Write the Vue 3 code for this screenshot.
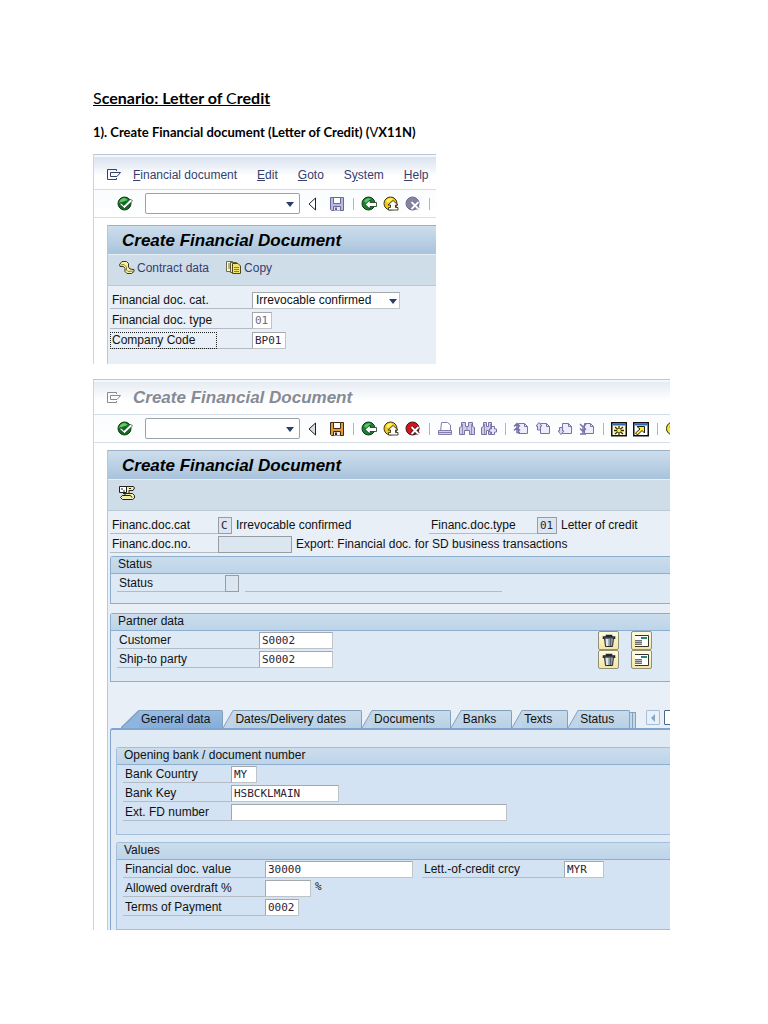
<template>
  <main class="page">
    <svg class="sprite" aria-hidden="true">
      <symbol id="menu" viewBox="0 0 16 16">
        <path d="M10.500 4V2.500H1.500V12.500H10.500V11M4.500 5.500H14.500L11 9.500H4.500Z" fill="none" stroke="currentColor" />
      </symbol>
      <symbol id="check" viewBox="0 0 16 16">
        <circle cx="7.500" cy="7.500" r="6.500" fill="#08731c" stroke="#123c16" />
        <path d="M2 7Q3 2 8 2L11 4L5 6Z" fill="#67c766" />
        <path d="M3.500 6.500L7 9.500L13.500 3L15.500 5L7.500 12.500L3 8.500Z" fill="#fff" stroke="#17351b" stroke-width=".7" />
      </symbol>
      <symbol id="disk" viewBox="0 0 16 16">
        <path d="M1.500 1.500H14.500V14.500H2.500L1.500 13.500Z" fill="var(--fill)" stroke="var(--line)" />
        <path d="M4.500 1.500H11.500V7.500H4.500Z" fill="#fff" stroke="var(--line)" />
        <path d="M4.500 14.500V10.500H11.500V14.500" fill="#e8e8ee" stroke="var(--line)" />
        <path d="M6 11.500H8V14H6Z" fill="var(--line)" />
      </symbol>
      <symbol id="back" viewBox="0 0 16 16">
        <circle cx="7.500" cy="7.500" r="6.500" fill="#15842d" stroke="#12361a" />
        <path d="M3 5Q6 1 10 3L5 7Z" fill="#60c665" />
        <path d="M4 8.500L9 4V6.500H15.500V10.500H9V13Z" fill="#fff" stroke="#17351b" stroke-width=".8" />
      </symbol>
      <symbol id="exit" viewBox="0 0 16 16">
        <circle cx="7.500" cy="7.500" r="6.500" fill="#f0c713" stroke="#403511" />
        <path d="M3 5Q6 1 10 3L5 7Z" fill="#fff36d" />
        <path d="M10 4.500L15 9H12.500V11.500H15V14H5.500V11.500H7.500V9H5Z" fill="#fff" stroke="#38321c" stroke-width=".9" />
      </symbol>
      <symbol id="cancel" viewBox="0 0 16 16">
        <circle cx="7.500" cy="7.500" r="6.500" fill="var(--fill)" stroke="var(--line)" />
        <path d="M6.500 6L13.500 13M13.500 6L6.500 13" stroke="var(--line)" stroke-width="3.500" />
        <path d="M6.500 6L13.500 13M13.500 6L6.500 13" stroke="#fff" stroke-width="2" />
      </symbol>
      <symbol id="print" viewBox="0 0 16 16">
        <path d="M4.500 1.500H10.500L13.500 4V10.500H3.500Z" fill="#fff" stroke="#817fae" />
        <path d="M1.500 9.500H14.500V13.500H1.500ZM2 11.500H14" fill="#d3d1ed" stroke="#817fae" />
      </symbol>
      <symbol id="find" viewBox="0 0 16 16">
        <path d="M2.500 1.500H6.500V5.500H9.500V1.500H13.500V5.500L15.500 6.500V13.500H10.500V9.500H5.500V13.500H.500V6.500L2.500 5.500Z" fill="#cfcbe9" stroke="#7773a7" />
        <path d="M3.500 3V13M8 5.500V9.500M12.500 3V13" stroke="#908bb9" />
      </symbol>
      <symbol id="findNext" viewBox="0 0 16 16">
        <path d="M2.500 1.500H5.500V5.500H7.500V1.500H10.500V5.500L11.500 6.500V13.500H7.500V9.500H5.500V13.500H.500V6.500L2.500 5.500Z" fill="#cfcbe9" stroke="#7773a7" />
        <path d="M3.500 3V13M9.500 3V13" stroke="#908bb9" />
        <path d="M10.500 5.500H13.500V8H15.500V11H13.500V13.500H10.500V11H8.500V8H10.500Z" fill="#e8e5f7" stroke="#7773a7" />
      </symbol>
      <symbol id="sheet" viewBox="0 0 16 16">
        <path d="M5.500 2.500H11.500L14.500 5.500V12.500H5.500Z" fill="#eeedfb" stroke="#7773a7" />
        <path d="M11.500 2.500V5.500H14.500" fill="none" stroke="#7773a7" />
      </symbol>
      <symbol id="first" viewBox="0 0 16 16">
        <use href="#sheet" />
        <path d="M1 5.500L4 2.500L7 5.500M1 9.500L4 6.500L7 9.500M4 3V11.500H7" fill="none" stroke="#7773a7" stroke-width="1.500" />
      </symbol>
      <symbol id="prev" viewBox="0 0 16 16">
        <use href="#sheet" />
        <path d="M1 5L4 1.500L7 5H5.500V9H2.500V5Z" fill="#dcd9f2" stroke="#7773a7" />
      </symbol>
      <symbol id="next" viewBox="0 0 16 16">
        <use href="#sheet" />
        <path d="M1 10H2.500V6.500H5.500V10H7L4 13.500Z" fill="#dcd9f2" stroke="#7773a7" />
      </symbol>
      <symbol id="last" viewBox="0 0 16 16">
        <use href="#sheet" />
        <path d="M1 3L4 6L7 3M1 7.500L4 10.500L7 7.500M1 13H7M4 6V13" fill="none" stroke="#7773a7" stroke-width="1.500" />
      </symbol>
      <symbol id="session" viewBox="0 0 16 16">
        <path d="M.750 1.750H15.250V14.750H.750Z" fill="#fffbd0" stroke="#111" stroke-width="1.500" />
        <path d="M1.500 2.500H14.500V4.500H1.500Z" fill="#2f66b5" />
        <path d="M8 5V8M8 11V14M3 9.500H6.500M9.500 9.500H13M4 6L7 8.500M12 6L9 8.500M4 13L7 10.500M12 13L9 10.500" stroke="#332f00" stroke-width="1.300" />
        <path d="M6.500 8H9.500V11H6.500Z" fill="#fff22c" />
      </symbol>
      <symbol id="shortcut" viewBox="0 0 16 16">
        <path d="M.750 1.750H15.250V14.750H.750Z" fill="#fff" stroke="#111" stroke-width="1.500" />
        <path d="M1.500 2.500H14.500V4.500H1.500Z" fill="#2f66b5" />
        <path d="M4 5.500H11.500V12L9 9.500L4.500 14L2.500 12L7 8Z" fill="#ffef29" stroke="#222" />
      </symbol>
      <symbol id="help" viewBox="0 0 16 16">
        <circle cx="8" cy="7.500" r="6.500" fill="#ffe51d" stroke="#2f2b10" />
        <path d="M5.500 6.500Q6 4 8 4T10.500 6.500Q10 8 8 9M8 11V12.500" fill="none" stroke="#222" stroke-width="2" />
      </symbol>
      <symbol id="contract" viewBox="0 0 16 16">
        <path d="M.500 4.500L3 1.500H7.500L9.500 3.500V7L11 9L15 9.500V11.500L12.500 13.500H8L6 11.500V8.500L4.500 6.500L1 6.500Z" fill="#f8eda0" stroke="#3b3822" />
        <path d="M1.500 5L5 4.500L7.500 7V10L9 11.500L14.500 11" fill="none" stroke="#8c8244" />
      </symbol>
      <symbol id="copy" viewBox="0 0 16 16">
        <path d="M.500 1.500H6.500V11.500H.500ZM2 4H5M2 6H5M2 8H5" fill="#fffbd6" stroke="#6d6a4d" />
        <path d="M4.500 2.500H10.500V12.500H4.500Z" fill="#f9f09c" stroke="#5f5b31" />
        <path d="M6.500 3.500H12L14.500 6V13.500H6.500Z" fill="#f3e26a" stroke="#4c4826" />
        <path d="M8 7.500H13M8 9.500H13M8 11.500H13" stroke="#8d8140" />
      </symbol>
      <symbol id="scroll" viewBox="0 0 16 16">
        <path d="M5.500 1.500H14.500L15.500 3L14 5.500H10V8.500H13.500L15.500 10.500V13L13.500 14.500H3.500L1.500 12.500L3.500 10.500H6V7Z" fill="#f1edac" stroke="#222" />
        <path d="M3.500 10.500H11.500L13 12.500M4 8.500H10" fill="none" stroke="#222" />
        <path d="M.500 1.500H7.500V7.500H.500Z" fill="#fff" stroke="#222" />
        <path d="M2 4H4M4 6H6M10 3.500H12" stroke="#222" />
      </symbol>
      <symbol id="trash" viewBox="0 0 16 16">
        <path d="M3.500 5H12.500L11.500 13.500H4.500Z" fill="#a6b0b8" stroke="#202830" />
        <path d="M6 6V13" stroke="#f5f7f8" stroke-width="1.500" />
        <path d="M9.500 6V13" stroke="#59636c" stroke-width="1.500" />
        <path d="M2.500 6V4H13.500V6M5.500 4V2.500H10.500V4" fill="none" stroke="#202830" stroke-width="1.600" />
      </symbol>
      <symbol id="address" viewBox="0 0 16 16">
        <path d="M1 2.500H14V13H1Z" fill="#fff" />
        <path d="M1 2.500H14.500V13.500H1" fill="none" stroke="#333" />
        <path d="M1 7H8V12H1Z" fill="#b9b9b9" />
        <path d="M1 7.500H8M1 9.500H8M1 11.500H8" stroke="#6e6e6e" />
        <path d="M7 4H10V6H7Z" fill="#34749b" />
        <path d="M10 4H13V6H10Z" fill="#279155" />
      </symbol>
    </svg>

    <h1><span>S</span>cenario: Letter of <span>C</span>redit</h1>
    <h2>1). Create Financial document (Letter of Credit) (<span>V</span>X11N)</h2>

    <section class="window initial">
      <nav class="menubar">
        <svg class="icon"><use href="#menu" /></svg>
        <a v-for="item in menu" :key="item.text" href="#">{{ item.before }}<u>{{ item.key }}</u>{{ item.text }}</a>
      </nav>
      <div class="toolbar">
        <button class="tool" aria-label="Enter"><svg class="icon"><use href="#check" /></svg></button>
        <div class="command">
          <input aria-label="Command" />
          <i class="arrow"></i>
        </div>
        <button class="collapse" aria-label="Hide command field">
          <svg viewBox="0 0 8 16"><path d="M7.500 2V14L1 8Z" fill="#fff" stroke="#222" /></svg>
        </button>
        <div v-for="(group, i) in shortTools" :key="i" class="tools">
          <button v-for="tool in group" :key="tool" class="tool off" :aria-label="tool">
            <svg class="icon"><use :href="'#' + tool" /></svg>
          </button>
        </div>
      </div>
      <div class="screen">
        <h3>Create Financial Document</h3>
        <div class="actions">
          <button><svg class="icon"><use href="#contract" /></svg>Contract data</button>
          <button><svg class="icon"><use href="#copy" /></svg>Copy</button>
        </div>
        <form class="content" @submit.prevent>
          <div class="row">
            <label class="label l142" for="cat">Financial doc. cat.</label>
            <div class="choice">
              <select id="cat"><option>Irrevocable confirmed</option></select>
              <i class="arrow"></i>
            </div>
          </div>
          <div class="row">
            <label class="label l142" for="type">Financial doc. type</label>
            <input id="type" class="w20 soft" value="01" />
          </div>
          <div class="row">
            <label class="label l142" for="company"><span class="focus">Company Code</span></label>
            <input id="company" class="w34" value="BP01" />
          </div>
        </form>
      </div>
    </section>

    <section class="window detail">
      <div class="menubar caption">
        <svg class="icon"><use href="#menu" /></svg>
        <strong>Create Financial Document</strong>
      </div>
      <div class="toolbar">
        <button class="tool" aria-label="Enter"><svg class="icon"><use href="#check" /></svg></button>
        <div class="command">
          <input aria-label="Command" />
          <i class="arrow"></i>
        </div>
        <button class="collapse" aria-label="Hide command field">
          <svg viewBox="0 0 8 16"><path d="M7.500 2V14L1 8Z" fill="#ddd" stroke="#222" /></svg>
        </button>
        <div v-for="(group, i) in allTools" :key="i" class="tools">
          <button v-for="tool in group" :key="tool" class="tool" :aria-label="tool">
            <svg class="icon"><use :href="'#' + tool" /></svg>
          </button>
        </div>
      </div>
      <div class="screen">
        <h3>Create Financial Document</h3>
        <div class="actions">
          <button aria-label="Document"><svg class="icon"><use href="#scroll" /></svg></button>
        </div>
        <form class="content" @submit.prevent>
          <div class="row">
            <label class="label l108" for="dcat">Financ.doc.cat</label>
            <input id="dcat" class="w14" value="C" readonly />
            <span class="text cat">Irrevocable confirmed</span>
            <label class="label l108" for="dtype">Financ.doc.type</label>
            <input id="dtype" class="w20" value="01" readonly />
            <span class="text">Letter of credit</span>
          </div>
          <div class="row">
            <label class="label l108" for="dno">Financ.doc.no.</label>
            <input id="dno" class="w74" readonly />
            <span class="text">Export: Financial doc. for SD business transactions</span>
          </div>

          <fieldset class="group status">
            <legend>Status</legend>
            <div class="row">
              <label class="label l108" for="status">Status</label>
              <input id="status" class="w14" readonly />
              <span class="rule"></span>
            </div>
          </fieldset>

          <fieldset class="group partner">
            <legend>Partner data</legend>
            <div v-for="partner in partners" :key="partner.id" class="row">
              <label class="label l142" :for="partner.id">{{ partner.label }}</label>
              <input :id="partner.id" class="w74" :value="partner.value" />
              <div class="keys">
                <button aria-label="Delete"><svg class="icon"><use href="#trash" /></svg></button>
                <button aria-label="Address"><svg class="icon"><use href="#address" /></svg></button>
              </div>
            </div>
          </fieldset>

          <div class="tabs">
            <button v-for="tab in tabs" :key="tab" class="tab" :class="{ active: tab === current }" @click="current = tab">
              <svg class="slant" viewBox="0 0 10 18" preserveAspectRatio="none">
                <path class="face" d="M0 18L10 0V18Z" />
                <path class="edge" d="M0 18L10 .500" />
              </svg>
              <span>{{ tab }}</span>
            </button>
            <i class="stack"></i>
            <i class="stack"></i>
            <button class="scroller" aria-label="Previous tabs"><i></i></button>
            <button class="scroller" aria-label="Next tabs"></button>
          </div>
          <div class="panel">
            <fieldset class="group">
              <legend>Opening bank / document number</legend>
              <div class="row">
                <label class="label l108" for="country">Bank Country</label>
                <input id="country" class="w26" value="MY" />
              </div>
              <div class="row">
                <label class="label l108" for="bank">Bank Key</label>
                <input id="bank" class="w108" value="HSBCKLMAIN" />
              </div>
              <div class="row">
                <label class="label l108" for="fd">Ext. FD number</label>
                <input id="fd" class="w276" />
              </div>
            </fieldset>
            <fieldset class="group">
              <legend>Values</legend>
              <div class="row">
                <label class="label l142" for="value">Financial doc. value</label>
                <input id="value" class="w148" value="30000" />
                <label class="label l142 currency" for="crcy">Lett.-of-credit crcy</label>
                <input id="crcy" class="w40" value="MYR" />
              </div>
              <div class="row">
                <label class="label l142" for="overdraft">Allowed overdraft %</label>
                <input id="overdraft" class="w46" />
                <span class="text mono">%</span>
              </div>
              <div class="row">
                <label class="label l142" for="terms">Terms of Payment</label>
                <input id="terms" class="w34" value="0002" />
              </div>
            </fieldset>
          </div>
        </form>
      </div>
    </section>
  </main>
</template>

<script setup>
import { ref } from 'vue'

const menu = [
  { before: '', key: 'F', text: 'inancial document' },
  { before: '', key: 'E', text: 'dit' },
  { before: '', key: 'G', text: 'oto' },
  { before: 'S', key: 'y', text: 'stem' },
  { before: '', key: 'H', text: 'elp' },
]

const shortTools = [['disk'], ['back', 'exit', 'cancel'], []]

const allTools = [
  ['disk'],
  ['back', 'exit', 'cancel'],
  ['print', 'find', 'findNext'],
  ['first', 'prev', 'next', 'last'],
  ['session', 'shortcut'],
  ['help'],
]

const partners = [
  { id: 'customer', label: 'Customer', value: 'S0002' },
  { id: 'shipto', label: 'Ship-to party', value: 'S0002' },
]

const tabs = ['General data', 'Dates/Delivery dates', 'Documents', 'Banks', 'Texts', 'Status']
const current = ref('General data')
</script>

<style>
body {
  margin: 0;
  background: #fff;
}
</style>

<style scoped>
* {
  box-sizing: border-box;
}

.page {
  padding: 88px 98px 94px 93px;
  font-family: "Liberation Sans", Arial, sans-serif;
  font-size: 12px;
  line-height: 16px;
  color: #111;
}

.sprite {
  display: none;
}

h1,
h2 {
  margin: 0;
  font-family: Lato, sans-serif;
  font-weight: 700;
  color: #000;
}

h1 {
  font-size: 16px;
  line-height: 20px;
  text-decoration: underline;
}

h2 {
  margin: 14px 0 12px;
  font-size: 13px;
  line-height: 20px;
}

h1 span,
h2 span {
  font-weight: 400;
}

button {
  padding: 0;
  border: 0;
  background: none;
  font: inherit;
  color: inherit;
}

.icon {
  display: block;
  flex: none;
  width: 16px;
  height: 16px;
}

.window {
  overflow: hidden;
  border-top: 1px solid #b9c7d9;
  border-left: 1px solid #cbd5e2;
}

.initial {
  max-width: 343px;
}

.detail {
  margin-top: 15px;
}

.menubar {
  display: flex;
  align-items: center;
  gap: 20px;
  height: 35px;
  padding: 4px 0 0 12px;
  border-top: 2px solid #f4f7fb;
  border-bottom: 1px solid #d5dde8;
  background: linear-gradient(#d9e2ef, #fff 60%);
  color: #33406f;
}

.menubar .icon {
  margin-right: -9px;
}

.menubar a {
  color: inherit;
  text-decoration: none;
  white-space: nowrap;
}

.caption {
  padding-top: 0;
  background: linear-gradient(#e6ecf4, #fff 60%);
  color: #858b95;
}

.caption strong,
h3 {
  font-size: 17px;
  font-style: italic;
  font-weight: 700;
  white-space: nowrap;
}

.toolbar {
  display: flex;
  align-items: center;
  height: 28px;
  padding-left: 23px;
  border-bottom: 1px solid #d5dde8;
  background: linear-gradient(#fafcfe, #fff);
}

.tool {
  --fill: #e49c3a;
  --line: #3e2b16;
  flex: none;
}

.tool[aria-label="cancel"] {
  --fill: #d4141c;
  --line: #451013;
}

.off {
  --fill: #bab9df;
  --line: #68679a;
}

.off[aria-label="cancel"] {
  --fill: #85849f;
  --line: #6e6d91;
}

.command {
  position: relative;
  flex: none;
  width: 155px;
  margin-left: 12px;
}

.command input {
  display: block;
  width: 100%;
  height: 21px;
  border: 1px solid #9da1a8;
  border-radius: 2px;
}

.arrow {
  position: absolute;
  top: 50%;
  right: 6px;
  margin-top: -2px;
  border: 4px solid transparent;
  border-top: 5px solid #2b3e6b;
  border-bottom: 0;
  pointer-events: none;
}

.collapse {
  flex: none;
  width: 8px;
  height: 16px;
  margin: 0 13px 0 8px;
}

.collapse svg {
  display: block;
}

.tools {
  display: flex;
  flex: none;
  align-items: center;
  gap: 6px;
}

.tools + .tools::before {
  content: "";
  width: 1px;
  height: 12px;
  margin: 0 1px 0 8px;
  background: #9cb9d8;
}

.screen {
  margin: 7px 0 0 13px;
  border-top: 1px solid #9cafc6;
  border-left: 1px solid #b9c8d8;
  background: #e8eff6;
}

h3 {
  height: 29px;
  margin: 0;
  padding-left: 14px;
  border-bottom: 1px solid #e8f0f7;
  background: linear-gradient(#cddeec, #a9c3dc);
  line-height: 29px;
  color: #000;
}

.actions {
  display: flex;
  align-items: center;
  gap: 17px;
  height: 31px;
  padding: 0 0 4px 11px;
  border-bottom: 1px solid #b9c9d7;
  background: #cfdde8;
  color: #33406f;
}

.actions button {
  display: flex;
  align-items: center;
  gap: 2px;
}

.content {
  padding: 5px 0 0 2px;
}

.initial .content {
  display: grid;
  gap: 1px;
  padding-bottom: 14px;
}

.row {
  display: flex;
  align-items: center;
  height: 19px;
  white-space: nowrap;
}

.label {
  flex: none;
  height: 17px;
  padding-left: 2px;
  border-bottom: 1px solid #b3bcc5;
  line-height: 17px;
}

.l108 {
  width: 108px;
}

.l142 {
  width: 142px;
}

.focus {
  display: block;
  width: 107px;
  height: 17px;
  margin-left: -2px;
  padding-left: 1px;
  border: 1px dotted #222;
  line-height: 15px;
}

.row input,
.choice select {
  flex: none;
  height: 17px;
  margin: 0;
  padding: 0 2px 1px;
  border: 1px solid #a3a8ad;
  border-right-color: #c0c4c8;
  border-bottom-color: #c0c4c8;
  border-radius: 0;
  outline: 0;
  background: #fff;
  font: 11px "DejaVu Sans Mono", monospace;
  color: #2c2433;
}

.row input[readonly] {
  border-color: #979da3;
  background: #dbe6f0;
}

.row .soft {
  color: #6e6e78;
}

.row .w14 { width: 14px; }
.row .w20 { width: 20px; }
.row .w26 { width: 26px; }
.row .w34 { width: 34px; }
.row .w40 { width: 40px; }
.row .w46 { width: 46px; }
.row .w74 { width: 74px; }
.row .w108 { width: 108px; }
.row .w148 { width: 148px; }
.row .w276 { width: 276px; }

.choice {
  position: relative;
}

.choice select {
  display: block;
  width: 148px;
  padding: 0 3px 2px;
  appearance: none;
  font: 12px "Liberation Sans", Arial, sans-serif;
  color: #111;
}

.choice .arrow {
  right: 3px;
}

.text {
  height: 17px;
  padding-left: 4px;
}

.cat {
  width: 197px;
}

.mono {
  font: 11px "DejaVu Sans Mono", monospace;
}

.group {
  min-width: 0;
  margin: 0;
  padding: 0 0 12px 6px;
  border: 1px solid #8eaed0;
  border-right: 0;
  border-radius: 3px 0 0 0;
  background: #dde9f5;
}

.group legend {
  float: left;
  width: calc(100% + 6px);
  height: 17px;
  margin-left: -6px;
  padding: 0 7px;
  border-bottom: 1px solid #8eaed0;
  background: linear-gradient(#cbddec, #bdd4e9);
  line-height: 15px;
}

.group legend + .row {
  clear: both;
}

.status {
  margin-top: 2px;
  padding-bottom: 10px;
}

.partner {
  margin-top: 9px;
}

.rule {
  align-self: flex-end;
  width: 257px;
  height: 1px;
  margin: 0 0 1px 6px;
  background: #b3bcc5;
}

.keys {
  display: flex;
  gap: 12px;
  margin: 0 18px 0 auto;
}

.keys button {
  width: 21px;
  height: 19px;
  padding: 0 2px;
  border: 1px solid #948f79;
  border-radius: 2px;
  background: linear-gradient(#fffbe0, #f3e6a0);
}

.tabs {
  display: flex;
  align-items: flex-end;
  height: 18px;
  margin: 28px 0 0 11px;
}

.tab {
  display: flex;
  flex: none;
  height: 18px;
}

.tab span {
  height: 18px;
  padding: 0 15px 0 2px;
  border-top: 1px solid #83a0bd;
  border-right: 1px solid #83a0bd;
  border-radius: 0 2px 0 0;
  background: linear-gradient(#c9dbea, #b8d0e5);
  line-height: 17px;
}

.slant {
  flex: none;
  width: 10px;
  height: 18px;
}

.face {
  fill: #c0d5e8;
}

.edge {
  fill: none;
  stroke: #83a0bd;
}

.active .slant {
  width: 18px;
}

.active .face {
  fill: #8fb5de;
}

.active span {
  padding-right: 12px;
  background: linear-gradient(#98bbe0, #86aeda);
}

.stack {
  flex: none;
  width: 3px;
  height: 16px;
  border-top: 1px solid #83a0bd;
  border-right: 1px solid #83a0bd;
  background: #c5d8e9;
}

.scroller {
  display: grid;
  flex: none;
  align-self: flex-start;
  place-items: center;
  width: 14px;
  height: 15px;
  margin-left: 4px;
  border: 1px solid #a5bdd8;
  border-radius: 1px;
  background: #e8f0f8;
}

.stack + .scroller {
  margin-left: 10px;
}

.scroller + .scroller {
  border-color: #4b6590;
  background: #fff;
}

.scroller i {
  border: 4px solid transparent;
  border-right: 4px solid #86a5cb;
  border-left: 0;
}

.panel {
  display: grid;
  gap: 7px;
  padding: 17px 0 0 5px;
  border-top: 2px solid #7fa5cf;
  border-left: 1px solid #7fa5cf;
  border-radius: 3px 0 0 0;
  background: #dfeaf5;
}

.panel .group {
  border-color: #a3bfdc;
  background: #d4e3f3;
}

.currency {
  margin-left: 9px;
}
</style>
